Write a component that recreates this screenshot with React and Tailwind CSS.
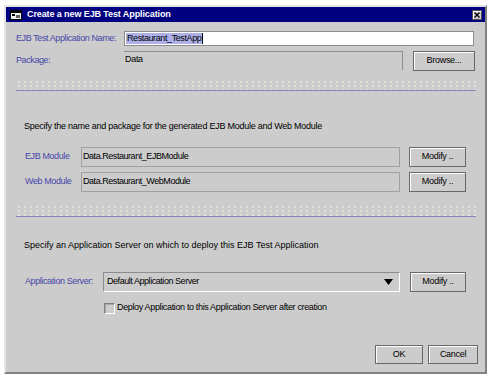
import React from "react";

const font = { fontFamily: '"Liberation Sans", Arial, sans-serif' };

function Button({ children, className = "" }) {
  return (
    <div
      className={`flex items-center justify-center border border-[#686868] bg-[#cccccc] text-[9px] tracking-[-0.3px] text-black shadow-[inset_1px_1px_0_#ffffff] ${className}`}
    >
      {children}
    </div>
  );
}

function Label({ children, className = "" }) {
  return <div className={`text-[9px] tracking-[-0.4px] text-[#4646a8] ${className}`}>{children}</div>;
}

function Separator({ className = "" }) {
  return (
    <div
      className={`ml-[10px] w-[460px] border-b border-[#8484bc] bg-[radial-gradient(#e2e2d6_1px,transparent_1.2px)] bg-[length:6px_4px] ${className}`}
    />
  );
}

function TitleIcon() {
  return (
    <svg width="12" height="10" viewBox="0 0 12 10">
      <rect x="0.5" y="0.5" width="11" height="9" fill="#f0f0f0" stroke="#000" />
      <rect x="1" y="1" width="10" height="2" fill="#000" />
      <rect x="2" y="4" width="3" height="2" fill="#000" />
      <rect x="6" y="5" width="4" height="3" fill="#606060" />
    </svg>
  );
}

export default function App() {
  return (
    <div className="h-[378px] w-[492px] bg-white pl-[4px] pt-[5px]" style={font}>
      <div className="h-[369px] w-[483px] border-2 border-b-[#808080] border-l-[#e4e4e4] border-r-[#808080] border-t-[#e4e4e4] bg-[#cccccc]">
        {/* title bar */}
        <div className="flex h-[15px] items-center bg-[#000080] pl-[4px] pr-[3px]">
          <TitleIcon />
          <span className="ml-[5px] text-[9px] font-bold tracking-[-0.1px] text-white">
            Create a new EJB Test Application
          </span>
          <div className="ml-auto flex h-[10px] w-[10px] items-center justify-center border border-[#505050] bg-[#cccccc] shadow-[inset_1px_1px_0_#ffffff]">
            <svg width="6" height="6" viewBox="0 0 6 6">
              <path d="M0.5 0.5 L5.5 5.5 M5.5 0.5 L0.5 5.5" stroke="#000" strokeWidth="1.3" />
            </svg>
          </div>
        </div>

        {/* name row */}
        <div className="mt-[9px] flex h-[15px] items-center pl-[10px]">
          <Label className="w-[108px]">EJB Test Application Name:</Label>
          <div className="flex h-[15px] w-[350px] items-center border border-[#8c8c8c] bg-white pl-[1px]">
            <span className="bg-[#aeb0e8] px-[1px] text-[9px] leading-[11px] tracking-[-0.4px] text-black">Restaurant_TestApp</span>
            <span className="h-[11px] w-px bg-black" />
          </div>
        </div>

        {/* package row */}
        <div className="mt-[5px] flex h-[20px] items-center pl-[10px]">
          <Label className="w-[108px]">Package:</Label>
          <div className="flex h-[19px] w-[279px] items-center self-start border-r border-t border-[#8c8c8c] pl-[1px] pb-[2px] text-[9px] tracking-[-0.3px] text-black">
            Data
          </div>
          <Button className="ml-[10px] h-[20px] w-[62px]">Browse...</Button>
        </div>

        <Separator className="mt-[9px] h-[11px]" />

        <div className="mt-[29px] h-[12px] pl-[18px] text-[9px] leading-[12px] tracking-[-0.25px] text-black">
          Specify the name and package for the generated EJB Module and Web Module
        </div>

        {/* module rows */}
        <div className="mt-[15px] flex flex-col gap-[5px]">
          <div className="flex h-[20px] items-center pl-[19px]">
            <Label className="w-[56px]">EJB Module</Label>
            <div className="flex h-[20px] w-[319px] items-center border border-[#a0a0a0] pl-[1px] text-[9px] tracking-[-0.45px] text-black">
              Data.Restaurant_EJBModule
            </div>
            <Button className="ml-[9px] h-[20px] w-[57px]">Modify ..</Button>
          </div>
          <div className="flex h-[20px] items-center pl-[19px]">
            <Label className="w-[56px]">Web Module</Label>
            <div className="flex h-[20px] w-[319px] items-center border border-[#a0a0a0] pl-[1px] text-[9px] tracking-[-0.45px] text-black">
              Data.Restaurant_WebModule
            </div>
            <Button className="ml-[9px] h-[20px] w-[57px]">Modify ..</Button>
          </div>
        </div>

        <Separator className="mt-[13px] h-[12px]" />

        <div className="mt-[22px] h-[12px] pl-[18px] text-[9px] leading-[12px] tracking-[0px] text-black">
          Specify an Application Server on which to deploy this EJB Test Application
        </div>

        {/* app server row */}
        <div className="mt-[21px] flex h-[20px] items-center pl-[19px]">
          <Label className="w-[78px]">Application Server:</Label>
          <div className="flex h-[20px] w-[297px] items-center border border-b-white border-l-[#8c8c8c] border-r-white border-t-[#8c8c8c] pl-[3px] pr-[6px] text-[9px] tracking-[-0.45px] text-black">
            Default Application Server
            <svg className="ml-auto" width="9" height="6" viewBox="0 0 9 6">
              <path d="M0 0 H9 L4.5 6 Z" fill="#000" />
            </svg>
          </div>
          <Button className="ml-[10px] h-[20px] w-[56px]">Modify ..</Button>
        </div>

        {/* checkbox */}
        <div className="mt-[10px] flex h-[12px] items-center pl-[98px]">
          <div className="h-[11px] w-[11px] border border-b-white border-l-[#808080] border-r-white border-t-[#808080] bg-[#cccccc] shadow-[inset_1px_1px_0_#a8a8a8]" />
          <span className="ml-[2px] text-[9px] tracking-[-0.35px] text-black">
            Deploy Application to this Application Server after creation
          </span>
        </div>

        {/* footer */}
        <div className="mt-[31px] flex justify-end gap-[5px] pr-[7px]">
          <Button className="h-[19px] w-[48px]">OK</Button>
          <Button className="h-[19px] w-[50px]">Cancel</Button>
        </div>
      </div>
    </div>
  );
}
